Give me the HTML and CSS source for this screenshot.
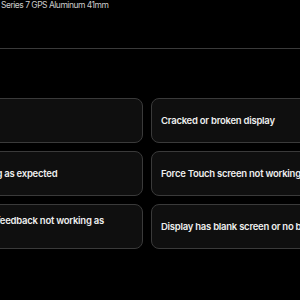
FILE: index.html
```html
<!DOCTYPE html>
<html lang="en">
<head>
    <meta charset="UTF-8">
    <meta name="viewport" content="width=device-width, initial-scale=1.0">
    <title>Choose an issue</title>
    <link rel="stylesheet" href="styles.css">
</head>

<body>
    <div class="page">
        <div class="product">Series 7 GPS Aluminum 41mm</div>
        <div class="divider"></div>
        <ul class="issues">
            <li class="issue">Battery issues</li>
            <li class="issue">Cracked or broken display</li>
            <li class="issue">Display not charging as expected</li>
            <li class="issue">Force Touch screen not working</li>
            <li class="issue">Speakers or haptic feedback not working as expected</li>
            <li class="issue">Display has blank screen or no backlight</li>
        </ul>
    </div>
</body>

</html>
```

FILE: styles.css
```css
* {
    margin: 0;
    padding: 0;
    box-sizing: border-box;
}

body {
    background-color: #000;
    color: #eee;
    font-family: Inter, "Liberation Sans", sans-serif;
    overflow: hidden;
}

.product {
    font-size: 8.5px;
    line-height: 11px;
    letter-spacing: -0.5px;
    color: #ccc;
    padding-left: 1px;
    white-space: nowrap;
}

/*分隔线*/
.divider {
    height: 1px;
    background-color: #3a3a3a;
    margin-top: 37px;
}

.issues {
    list-style: none;
    display: grid;
    grid-template-columns: 240px 240px;
    gap: 8px;
    margin-top: 49px;
    margin-left: -97px;
}

.issue {
    height: 45px;
    display: flex;
    align-items: center;
    padding: 0 9px;
    background-color: #0f0f0f;
    border: 1px solid #3a3a3a;
    border-radius: 8px;
    font-size: 9.5px;
    font-weight: 600;
    line-height: 13px;
    letter-spacing: -0.25px;
}
```
